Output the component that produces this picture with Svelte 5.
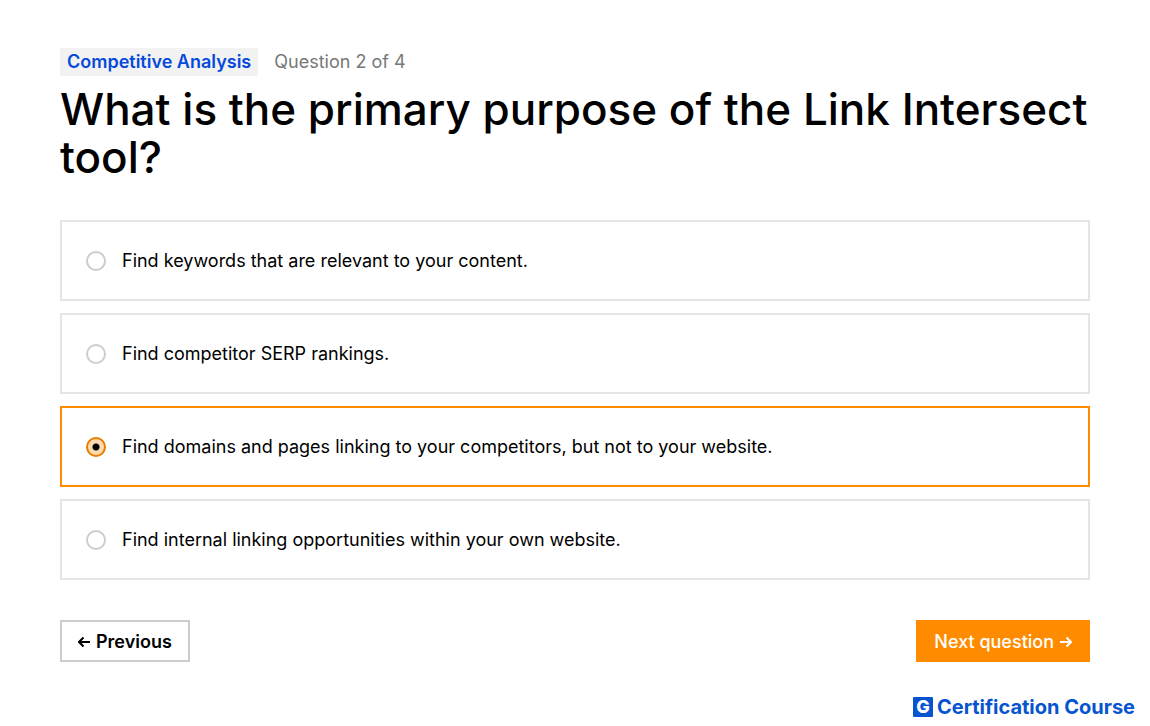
<script lang="ts">
	const options = [
		'Find keywords that are relevant to your content.',
		'Find competitor SERP rankings.',
		'Find domains and pages linking to your competitors, but not to your website.',
		'Find internal linking opportunities within your own website.'
	];

	let selected = $state(2);
</script>

<main class="quiz">
	<div class="meta">
		<span class="topic">Competitive Analysis</span>
		<span class="progress">Question 2 of 4</span>
	</div>

	<h1>What is the primary purpose of the Link Intersect tool?</h1>

	<div class="options" role="radiogroup" aria-label="Answers">
		{#each options as option, i}
			<label class="option" class:selected={selected === i}>
				<input type="radio" name="answer" value={i} bind:group={selected} />
				<span>{option}</span>
			</label>
		{/each}
	</div>

	<div class="actions">
		<button type="button" class="previous">
			<svg class="arrow" viewBox="0 0 12 12" aria-hidden="true">
				<path d="M12 6H1.5M5.5 1.5L1 6l4.5 4.5" />
			</svg>
			Previous
		</button>
		<button type="button" class="next">
			Next question
			<svg class="arrow" viewBox="0 0 12 12" aria-hidden="true">
				<path d="M0 6h10.5M6.5 1.5L11 6l-4.5 4.5" />
			</svg>
		</button>
	</div>
</main>

<footer class="brand">
	<span class="mark">G</span>
	<span>Certification Course</span>
</footer>

<style>
	:global(body) {
		background: #fff;
		color: #000;
		font-family: Inter, sans-serif;
	}

	.quiz {
		padding: 48px 60px 0;
	}

	.meta {
		display: flex;
		align-items: center;
		gap: 16px;
		font-size: 18px;
		line-height: 28px;
	}

	.topic {
		padding: 0 7px;
		background: #f2f2f2;
		color: #054ada;
		font-weight: 600;
	}

	.progress {
		color: #777;
	}

	h1 {
		margin: 9px 0 39px;
		font-size: 44px;
		font-weight: 500;
		line-height: 48px;
	}

	.options {
		display: flex;
		flex-direction: column;
		gap: 12px;
	}

	.option {
		display: flex;
		align-items: center;
		gap: 16px;
		padding: 24px;
		border: 2px solid #e5e5e5;
		font-size: 18px;
		line-height: 29px;
		cursor: pointer;
	}

	.option.selected {
		border-color: #ff8c00;
	}

	.option input {
		appearance: none;
		flex: none;
		box-sizing: border-box;
		width: 20px;
		height: 20px;
		margin: 0;
		border: 2px solid #ccc;
		border-radius: 50%;
		background: #fff;
	}

	.option input:checked {
		border-color: #e67e00;
		background: radial-gradient(circle, #000 3px, #ffd9b0 4px);
	}

	.actions {
		display: flex;
		justify-content: space-between;
		margin-top: 40px;
	}

	button {
		display: flex;
		align-items: center;
		gap: 6px;
		padding: 8px 16px 6px;
		border: 2px solid #ff8c00;
		font-family: Inter, sans-serif;
		font-size: 18px;
		font-weight: 600;
		line-height: 24px;
		cursor: pointer;
	}

	.previous {
		border-color: #ccc;
		background: #fff;
		color: #000;
	}

	.next {
		background: #ff8c00;
		color: #fff;
		font-weight: 500;
	}

	.arrow {
		width: 12px;
		height: 12px;
		fill: none;
		stroke: currentColor;
		stroke-width: 2;
	}

	.brand {
		display: flex;
		align-items: center;
		justify-content: flex-end;
		gap: 4px;
		padding: 35px 15px 0;
		color: #0654d0;
		font-size: 20px;
		font-weight: 700;
		line-height: 20px;
	}

	.mark {
		width: 20px;
		border-radius: 1px;
		background: #0654d0;
		color: #fff;
		font-size: 18px;
		font-weight: 800;
		text-align: center;
	}
</style>
